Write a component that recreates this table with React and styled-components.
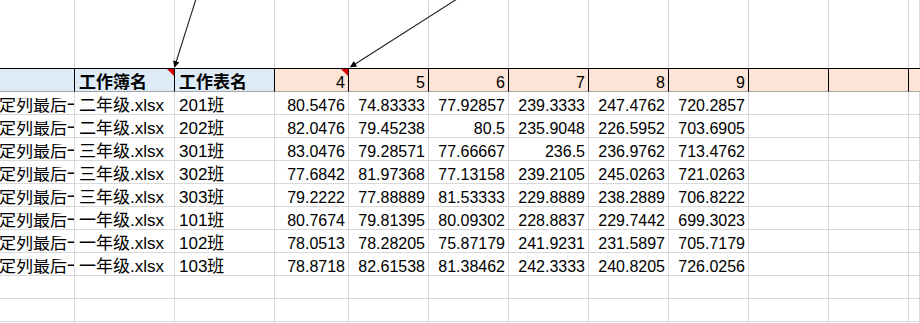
import React from "react";
import styled, { createGlobalStyle } from "styled-components";

const GlobalStyle = createGlobalStyle`
  html, body {
    margin: 0;
    padding: 0;
    background: #fff;
  }
  body {
    font-family: "Liberation Sans", "Noto Sans CJK SC", sans-serif;
    overflow: hidden;
  }
`;

const columns = "75px 100px 100px 74px 80px 80px 80px 80px 80px 80px 80px 1fr";

const rows = [
  ["二年级.xlsx", "201班", "80.5476", "74.83333", "77.92857", "239.3333", "247.4762", "720.2857"],
  ["二年级.xlsx", "202班", "82.0476", "79.45238", "80.5", "235.9048", "226.5952", "703.6905"],
  ["三年级.xlsx", "301班", "83.0476", "79.28571", "77.66667", "236.5", "236.9762", "713.4762"],
  ["三年级.xlsx", "302班", "77.6842", "81.97368", "77.13158", "239.2105", "245.0263", "721.0263"],
  ["三年级.xlsx", "303班", "79.2222", "77.88889", "81.53333", "229.8889", "238.2889", "706.8222"],
  ["一年级.xlsx", "101班", "80.7674", "79.81395", "80.09302", "228.8837", "229.7442", "699.3023"],
  ["一年级.xlsx", "102班", "78.0513", "78.28205", "75.87179", "241.9231", "231.5897", "705.7179"],
  ["一年级.xlsx", "103班", "78.8718", "82.61538", "81.38462", "242.3333", "240.8205", "726.0256"],
];

const App = () => {
  return (
    <>
      <GlobalStyle />
      <Sheet>
        <Row $height={68}>
          {Array.from({ length: 12 }).map((_, i) => (
            <Cell key={i} $noBottom />
          ))}
        </Row>

        <HeaderRow>
          <HeadCell $fill="blue" />
          <HeadCell $fill="blue" $text>
            工作簿名
            <Comment />
          </HeadCell>
          <HeadCell $fill="blue" $text>
            工作表名
          </HeadCell>
          {[4, 5, 6, 7, 8, 9].map((n, i) => (
            <HeadCell key={n} $fill="peach">
              {n}
              {i === 0 && <Comment />}
            </HeadCell>
          ))}
          <HeadCell $fill="peach" />
          <HeadCell $fill="peach" />
          <HeadCell $fill="peach" $last />
        </HeaderRow>

        {rows.map((r, ri) => (
          <Row key={ri}>
            <Cell $text $clip>
              <Overflow>定列最后一</Overflow>
            </Cell>
            <Cell $text>{r[0]}</Cell>
            <Cell $text>{r[1]}</Cell>
            {r.slice(2).map((v, i) => (
              <Cell key={i}>{v}</Cell>
            ))}
            <Cell />
            <Cell />
            <Cell />
          </Row>
        ))}

        {[0, 1, 2].map((k) => (
          <Row key={"e" + k}>
            {Array.from({ length: 12 }).map((_, i) => (
              <Cell key={i} />
            ))}
          </Row>
        ))}

        <Arrows width="920" height="323">
          <defs>
            <marker
              id="head"
              viewBox="0 0 10 10"
              refX="9"
              refY="5"
              markerWidth="6"
              markerHeight="6"
              orient="auto"
            >
              <path d="M0 0 L10 5 L0 10 z" fill="#000" />
            </marker>
          </defs>
          <line x1="196" y1="-1" x2="174.5" y2="67" stroke="#222" strokeWidth="1.1" markerEnd="url(#head)" />
          <line x1="457" y1="-1" x2="350.5" y2="67" stroke="#222" strokeWidth="1.1" markerEnd="url(#head)" />
        </Arrows>
      </Sheet>
    </>
  );
};

export default App;

const Sheet = styled.div`
  position: relative;
  width: 920px;
  height: 323px;
  overflow: hidden;
  font-size: 16px;
  color: #000;
`;

const Row = styled.div`
  display: grid;
  grid-template-columns: ${columns};
  height: ${(p) => p.$height || 23}px;
`;

const HeaderRow = styled(Row)`
  height: 24px;
`;

const Cell = styled.div`
  box-sizing: border-box;
  position: relative;
  border-right: 1px solid #d9d9d9;
  border-bottom: ${(p) => (p.$noBottom ? "none" : "1px solid #d9d9d9")};
  display: flex;
  align-items: flex-end;
  justify-content: ${(p) => (p.$text ? "flex-start" : "flex-end")};
  padding: 0 3px 1px 4px;
  font-size: ${(p) => (p.$text ? "17px" : "16px")};
  line-height: 15px;
  white-space: nowrap;
  overflow: hidden;
  ${(p) => p.$clip && "padding-left: 0; padding-right: 0;"}
`;

const Overflow = styled.span`
  display: block;
  width: 74px;
  overflow: hidden;
  text-indent: -1px;
`;

const HeadCell = styled.div`
  box-sizing: border-box;
  position: relative;
  background: ${(p) => (p.$fill === "blue" ? "#ddebf7" : "#fce4d6")};
  border-top: 1px solid #000;
  border-bottom: 1px solid #a6a6a6;
  border-right: ${(p) => (p.$last ? "none" : "1px solid #000")};
  display: flex;
  align-items: flex-end;
  justify-content: ${(p) => (p.$text ? "flex-start" : "flex-end")};
  padding: 0 3px 1px 4px;
  font-size: ${(p) => (p.$text ? "17px" : "16px")};
  font-weight: ${(p) => (p.$text ? 700 : 400)};
  line-height: 15px;
  white-space: nowrap;
`;

const Comment = styled.span`
  position: absolute;
  top: 0;
  right: 0;
  width: 0;
  height: 0;
  border-top: 7px solid #e00000;
  border-left: 7px solid transparent;
`;

const Arrows = styled.svg`
  position: absolute;
  top: 0;
  left: 0;
  pointer-events: none;
`;
